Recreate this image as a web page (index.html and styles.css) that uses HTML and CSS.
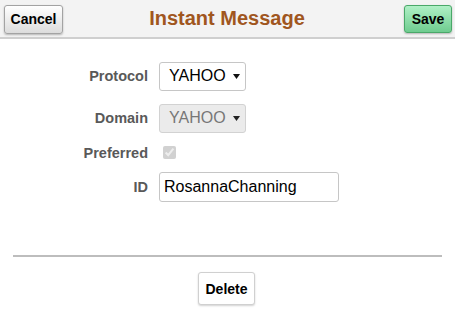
FILE: index.html
```html
<!DOCTYPE html>
<html>
<head>
<meta charset="utf-8">
<link rel="stylesheet" href="styles.css">
</head>
<body>
<div class="page">
  <header class="bar">
    <button class="btn btn-cancel">Cancel</button>
    <h1 class="title">Instant Message</h1>
    <button class="btn btn-save">Save</button>
  </header>
  <form class="form">
    <label class="lbl">Protocol</label>
    <div class="sel">
      <span class="sel-val">YAHOO</span>
      <svg class="arrow" width="7" height="5" viewBox="0 0 7 5"><path d="M0 0H7L3.5 5Z" fill="#111"/></svg>
    </div>
    <label class="lbl">Domain</label>
    <div class="sel sel-dis">
      <span class="sel-val">YAHOO</span>
      <svg class="arrow" width="7" height="5" viewBox="0 0 7 5"><path d="M0 0H7L3.5 5Z" fill="#222"/></svg>
    </div>
    <label class="lbl lbl-small">Preferred</label>
    <div class="chkcell"><input type="checkbox" class="chk" checked disabled></div>
    <label class="lbl">ID</label>
    <div><input type="text" class="txt" value="RosannaChanning"></div>
  </form>
  <hr class="divider">
  <div class="actions">
    <button class="btn btn-delete">Delete</button>
  </div>
</div>
</body>
</html>
```
FILE: styles.css
```css
html, body {
  margin: 0;
  padding: 0;
  background: #fff;
  font-family: "Liberation Sans", Arial, sans-serif;
}
.page {
  width: 455px;
  height: 330px;
}
.bar {
  height: 37px;
  background: #f3f3f3;
  border-bottom: 2px solid #cfcfcf;
  display: flex;
  align-items: center;
  justify-content: space-between;
  padding: 0 3px 0 4px;
  position: relative;
}
.title {
  margin: 0;
  font-size: 20px;
  font-weight: bold;
  color: #a0561e;
  position: absolute;
  left: 0;
  right: 1px;
  text-align: center;
  top: 7px;
  pointer-events: none;
}
.btn {
  font-family: "Liberation Sans", Arial, sans-serif;
  font-weight: bold;
  font-size: 14px;
  color: #000;
  border-radius: 3px;
  padding: 0;
  cursor: pointer;
}
.btn-cancel {
  width: 59px;
  height: 29px;
  margin-top: 1px;
  background: linear-gradient(#ffffff, #dcdcdc);
  border: 1px solid #a3a3a3;
  box-shadow: 0 1px 2px rgba(0,0,0,0.25);
}
.btn-save {
  width: 48px;
  height: 28px;
  margin-top: 0;
  background: linear-gradient(#b0f0c6, #6fcc8f);
  border: 1px solid #4aa869;
  box-shadow: 0 1px 2px rgba(0,0,0,0.25);
}
.form {
  display: grid;
  grid-template-columns: 148px auto;
  column-gap: 11px;
  row-gap: 12px;
  grid-template-rows: 30px 30px 15px 30px;
  align-items: center;
  margin: 22px 0 0 0;
}
.lbl {
  text-align: right;
  font-weight: bold;
  font-size: 14.5px;
  color: #595959;
}
.sel {
  box-sizing: border-box;
  width: 87px;
  height: 29px;
  border: 1px solid #c6c6c6;
  border-radius: 3px;
  background: #fff;
  display: flex;
  align-items: center;
  justify-content: space-between;
  padding: 0 5px 0 9px;
  font-size: 16px;
  color: #000;
}
.sel-dis {
  background: #ebebeb;
  color: #777;
  border-color: #d2d2d2;
}
.sel-val {
  line-height: 1;
}
.arrow {
  display: block;
  margin-top: 1px;
}
.chkcell {
  height: 15px;
  display: flex;
  align-items: center;
}
.chk {
  margin: 0 0 0 4px;
  width: 13px;
  height: 13px;
}
.txt {
  box-sizing: border-box;
  width: 180px;
  height: 30px;
  border: 1px solid #c6c6c6;
  border-radius: 3px;
  padding: 0 4px;
  font-family: "Liberation Sans", Arial, sans-serif;
  font-size: 16px;
  color: #000;
  display: block;
}
.divider {
  margin: 53px 13px 0 13px;
  border: 0;
  border-top: 2px solid #bdbdbd;
  height: 0;
}
.actions {
  display: flex;
  justify-content: center;
  padding-top: 15px;
}
.btn-delete {
  width: 57px;
  height: 33px;
  background: #fff;
  border: 1px solid #d0d0d0;
  box-shadow: 0 1px 2px rgba(0,0,0,0.18);
  margin-right: 2px;
}
```
